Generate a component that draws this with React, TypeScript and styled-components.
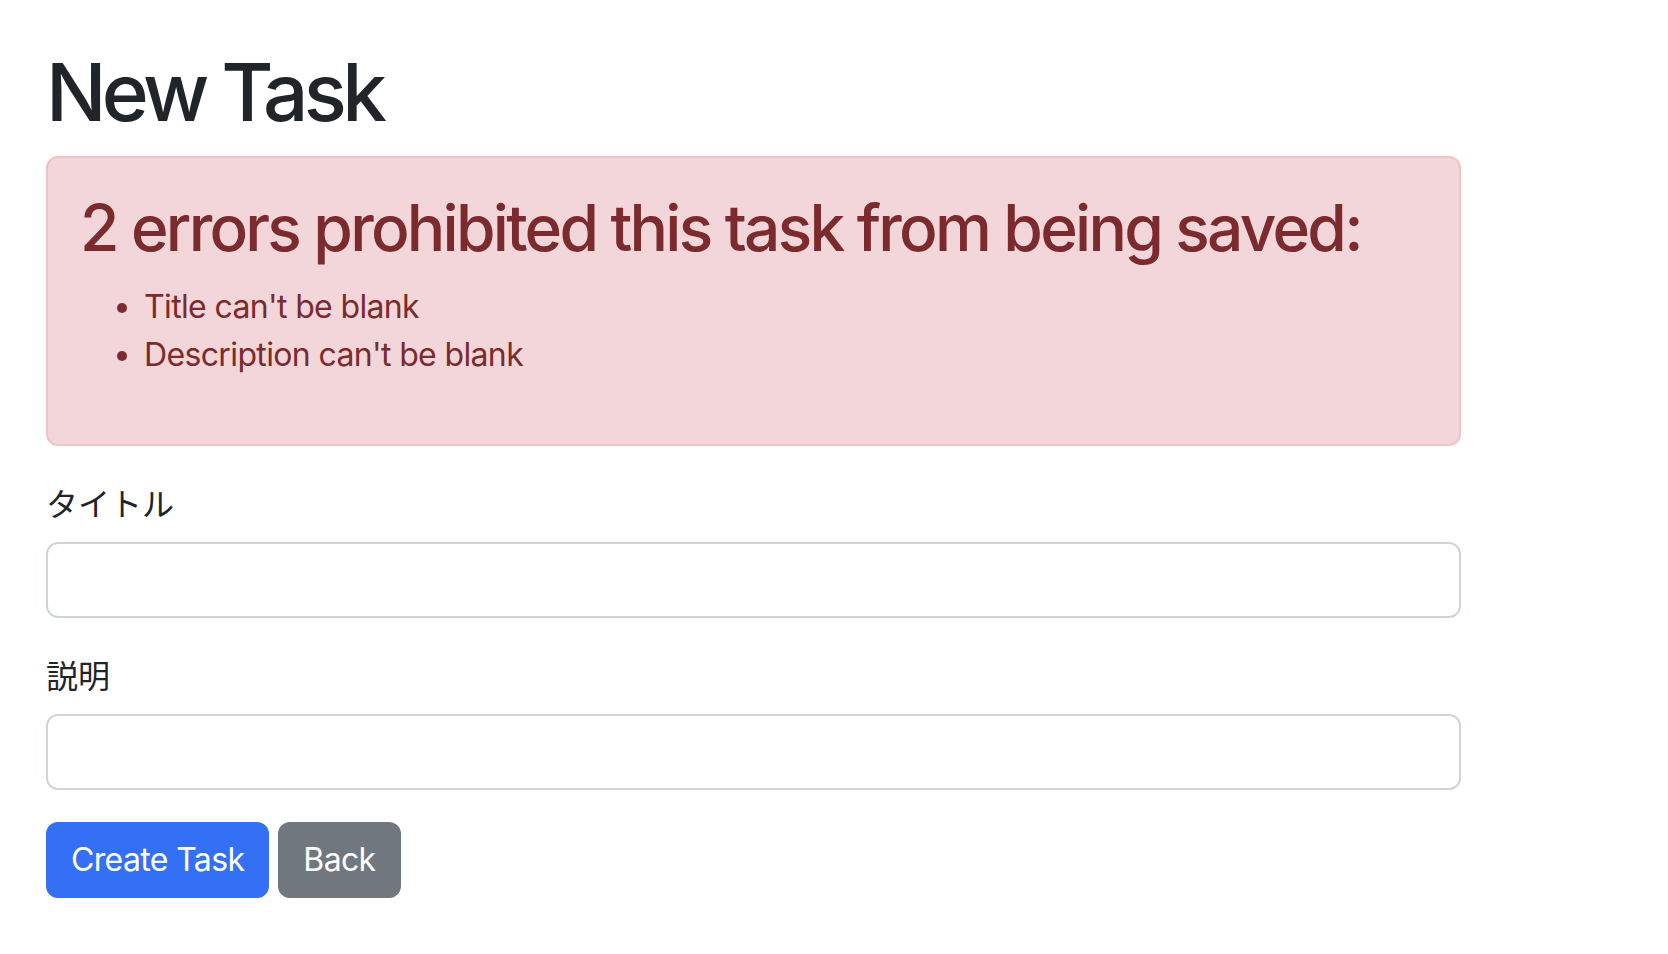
import React from "react";
import styled, { createGlobalStyle } from "styled-components";

const GlobalStyle = createGlobalStyle`
  * {
    box-sizing: border-box;
  }

  body {
    margin: 0;
    background: #fff;
    color: #212529;
    font-family: Inter, "Noto Sans CJK JP", sans-serif;
    font-size: 32px;
    line-height: 1.5;
    letter-spacing: -0.02em;
  }
`;

const Page = styled.main`
  width: 1415px;
  margin-left: 46px;
  padding-top: 44px;
`;

const Title = styled.h1`
  margin: 0 0 16px;
  font-size: 80px;
  font-weight: 500;
  line-height: 1.2;
  letter-spacing: -0.058em;
  color: #212529;
`;

const ErrorAlert = styled.div`
  margin-bottom: 32px;
  padding: 32px 32px 33px;
  background: #f3d6d9;
  border: 2px solid #efc3c7;
  border-radius: 12px;
  color: #7b2a2d;

  h2 {
    margin: 0 0 16px;
    font-size: 64px;
    font-weight: 500;
    line-height: 1.2;
    letter-spacing: -0.043em;
  }

  ul {
    margin: 0 0 32px;
    padding-left: 64px;
  }
`;

const Field = styled.div`
  margin-bottom: 32px;
`;

const Label = styled.label`
  display: block;
  margin-bottom: 16px;
  font-family: "Noto Sans CJK JP", Inter, sans-serif;
  font-size: 32px;
  letter-spacing: 0;
  color: #212529;
`;

const TextInput = styled.input`
  display: block;
  width: 100%;
  height: 76px;
  padding: 12px 24px;
  font: inherit;
  border: 2px solid #ced4da;
  border-radius: 12px;
  background: #fff;
  outline: none;
`;

const Actions = styled.div`
  display: flex;
  gap: 9px;
`;

const Button = styled.button<{ $variant: "primary" | "secondary" }>`
  height: 76px;
  padding: 12px 25px;
  font: inherit;
  letter-spacing: -0.02em;
  color: #fff;
  border: none;
  border-radius: 12px;
  background: ${(p) => (p.$variant === "primary" ? "#3470f5" : "#71777f")};
  cursor: pointer;
`;

const App = () => {
  return (
    <>
      <GlobalStyle />
      <Page>
        <Title>New Task</Title>
        <ErrorAlert>
          <h2>2 errors prohibited this task from being saved:</h2>
          <ul>
            <li>Title can't be blank</li>
            <li>Description can't be blank</li>
          </ul>
        </ErrorAlert>
        <Field>
          <Label htmlFor="task_title">タイトル</Label>
          <TextInput id="task_title" type="text" />
        </Field>
        <Field>
          <Label htmlFor="task_description">説明</Label>
          <TextInput id="task_description" type="text" />
        </Field>
        <Actions>
          <Button $variant="primary">Create Task</Button>
          <Button $variant="secondary">Back</Button>
        </Actions>
      </Page>
    </>
  );
};

export default App;
